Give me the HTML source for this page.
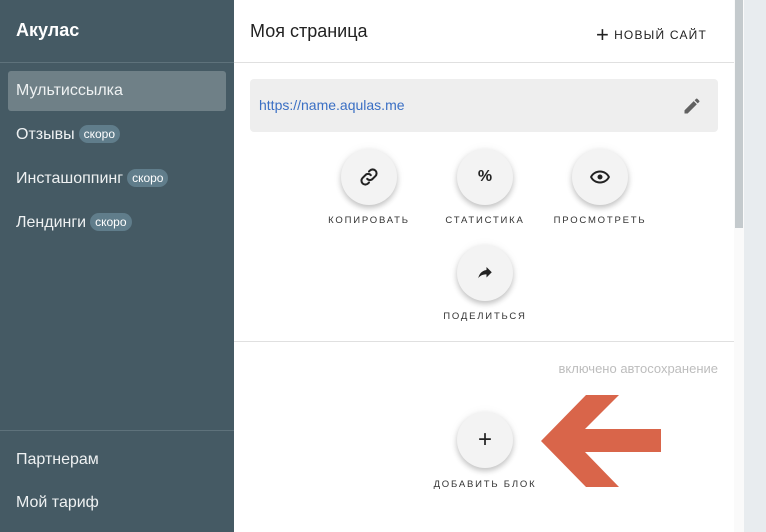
<!DOCTYPE html>
<html><head><meta charset="utf-8"><style>
*{margin:0;padding:0;box-sizing:border-box}
body{width:766px;height:532px;overflow:hidden;font-family:"Liberation Sans",Arial,sans-serif;background:#fff;position:relative}
.sb{position:absolute;left:0;top:0;width:234px;height:532px;background:#455a64;color:#fff}
.sb .t{position:absolute;left:16px;top:20px;font-size:18px;font-weight:bold}
.ln{position:absolute;left:0;width:234px;height:1px;background:#5e727b}
.it{position:absolute;left:16px;font-size:16px;color:#eef1f2}
.act{position:absolute;left:8px;top:71px;width:218px;height:40px;background:#6f8087;border-radius:3px}
.bd{display:inline-block;background:#607d8b;border-radius:9px;font-size:12px;padding:2px 5px;margin-left:4px;vertical-align:1px;color:#fff}
.main{position:absolute;left:234px;top:0;width:500px;height:532px}
.abs{position:absolute}
.circ{position:absolute;width:56px;height:56px;border-radius:50%;background:#f3f3f3;box-shadow:0 3px 6px rgba(0,0,0,.22),0 0 10px rgba(0,0,0,.05);display:flex;align-items:center;justify-content:center}
.lb{position:absolute;font-size:9.5px;letter-spacing:1.8px;color:#333;text-align:center;width:140px}
</style></head><body>
<div class="sb">
<div class="t">Акулас</div>
<div class="ln" style="top:62px"></div>
<div class="act"></div>
<div class="it" style="top:82px">Мультиссылка</div>
<div class="it" style="top:125px">Отзывы<span class="bd">скоро</span></div>
<div class="it" style="top:169px">Инсташоппинг<span class="bd">скоро</span></div>
<div class="it" style="top:213px">Лендинги<span class="bd">скоро</span></div>
<div class="ln" style="top:430px"></div>
<div class="it" style="top:451px">Партнерам</div>
<div class="it" style="top:494px">Мой тариф</div>
</div>
<div class="main">
<div class="abs" style="left:16px;top:21px;font-size:18px;color:#222">Моя страница</div>
<div class="abs" style="left:362px;top:22px;font-size:12px;letter-spacing:1.2px;color:#222"><span style="font-size:22px;vertical-align:-3px;margin-right:4px">+</span>НОВЫЙ САЙТ</div>
<div class="abs" style="left:0;top:62px;width:500px;height:1px;background:#e0e0e0"></div>
<div class="abs" style="left:16px;top:79px;width:468px;height:53px;background:#eeeeee;border-radius:4px"></div>
<div class="abs" style="left:25px;top:97px;font-size:14px;color:#3a6fc4">https://name.aqulas.me</div>
<svg class="abs" style="left:448px;top:96px" width="20" height="20" viewBox="0 0 24 24"><path fill="#616161" d="M3 17.25V21h3.75L17.81 9.94l-3.75-3.75L3 17.25zM20.71 7.04a1 1 0 000-1.41l-2.34-2.34a1 1 0 00-1.41 0l-1.83 1.83 3.75 3.75 1.83-1.83z"/></svg>
<div class="circ" style="left:107px;top:149px"><svg width="22" height="22" viewBox="0 0 24 24" fill="none" stroke="#222" stroke-width="2.2" stroke-linecap="round"><path d="M10 14a4 4 0 006 0l3-3a4 4 0 00-6-6l-1 1"/><path d="M14 10a4 4 0 00-6 0l-3 3a4 4 0 006 6l1-1"/></svg></div>
<div class="lb" style="left:65px;top:215px">КОПИРОВАТЬ</div>
<div class="circ" style="left:223px;top:149px;font-size:16px;font-weight:bold;color:#222">%</div>
<div class="lb" style="left:181px;top:215px">СТАТИСТИКА</div>
<div class="circ" style="left:338px;top:149px"><svg width="24" height="24" viewBox="0 0 24 24"><path fill="#222" d="M12 5.5C7.5 5.5 3.6 8.2 2 12c1.6 3.8 5.5 6.5 10 6.5s8.4-2.7 10-6.5c-1.6-3.8-5.5-6.5-10-6.5zm0 11c-3.4 0-6.4-1.8-7.8-4.5C5.6 9.3 8.6 7.5 12 7.5s6.4 1.8 7.8 4.5c-1.4 2.7-4.4 4.5-7.8 4.5zm0-7a2.5 2.5 0 100 5 2.5 2.5 0 000-5z"/></svg></div>
<div class="lb" style="left:296px;top:215px">ПРОСМОТРЕТЬ</div>
<div class="circ" style="left:223px;top:245px"><svg width="18" height="18" viewBox="0 0 24 24"><path fill="#222" d="M14 8V4l7 7-7 7v-4.1c-5 0-8.5 1.6-11 5.1 1-5 4-10 11-11z"/></svg></div>
<div class="lb" style="left:181px;top:311px">ПОДЕЛИТЬСЯ</div>
<div class="abs" style="left:0;top:341px;width:500px;height:1px;background:#e0e0e0"></div>
<div class="abs" style="right:16px;top:361px;font-size:13px;color:#bdbdbd">включено автосохранение</div>
<div class="circ" style="left:223px;top:412px;font-size:24px;color:#222;font-weight:300">+</div>
<div class="lb" style="left:181px;top:479px">ДОБАВИТЬ БЛОК</div>
</div>
<svg class="abs" style="left:0;top:0" width="766" height="532"><polygon fill="#d9654a" points="541,441 586,395 619,395 585,429 661,429 661,452 585,452 619,487 586,487"/></svg>
<div class="abs" style="left:734px;top:0;width:10px;height:532px;background:#fafafa"></div>
<div class="abs" style="left:735px;top:0;width:8px;height:228px;background:#c4cacd"></div>
<div class="abs" style="left:744px;top:0;width:22px;height:532px;background:#e8ecef"></div>
</body></html>
